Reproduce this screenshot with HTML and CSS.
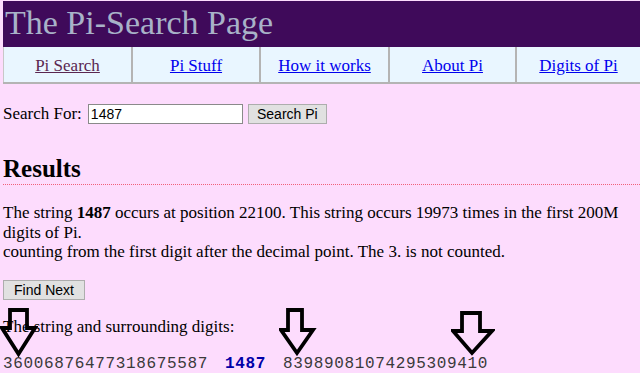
FILE: index.html
```html
<!DOCTYPE html>
<html>
<head>
<meta charset="utf-8">
<title>The Pi-Search Page</title>
<link rel="stylesheet" href="styles.css">
</head>
<body>
<div class="page">
  <header class="banner">
    <h1 class="banner-title">The Pi-Search Page</h1>
  </header>
  <nav class="menu">
    <div class="menu-cell"><a class="visited" href="#">Pi Search</a></div>
    <div class="menu-cell"><a href="#">Pi Stuff</a></div>
    <div class="menu-cell"><a href="#">How it works</a></div>
    <div class="menu-cell"><a href="#">About Pi</a></div>
    <div class="menu-cell last"><a href="#">Digits of Pi</a></div>
  </nav>
  <form class="search">
    <label class="search-label" for="q">Search For:</label>
    <input class="search-input" id="q" type="text" value="1487">
    <button class="btn search-btn" type="button">Search Pi</button>
  </form>
  <h2 class="results-title">Results</h2>
  <p class="results-text">The string <b>1487</b> occurs at position 22100. This string occurs 19973 times in the first 200M digits of Pi.<br>counting from the first digit after the decimal point. The 3. is not counted.</p>
  <button class="btn find" type="button">Find Next</button>
  <p class="digits-label">The string and surrounding digits:</p>
  <div class="digits"><span>36006876477318675587</span><b class="hit">1487</b><span>83989081074295309410</span></div>

  <svg class="arrow a1" width="38" height="50" viewBox="0 0 38 50"><polygon points="10,2 27,2 27,20 35,20 18.5,46 2,20 10,20" fill="none" stroke="#000" stroke-width="3.8" stroke-linejoin="miter"/></svg>
  <svg class="arrow a2" width="38" height="50" viewBox="0 0 38 50"><polygon points="9,2 23,2 23,22 34,22 18,45 2,22 9,22" fill="none" stroke="#000" stroke-width="3.8" stroke-linejoin="miter"/></svg>
  <svg class="arrow a3" width="44" height="48" viewBox="0 0 44 48"><polygon points="11,2 29,2 29,20 41,20 21,42 2,20 11,20" fill="none" stroke="#000" stroke-width="3.8" stroke-linejoin="miter"/></svg>
</div>
</body>
</html>
```
FILE: styles.css
```css
html, body {
  margin: 0;
  padding: 0;
  background: #fddcfd;
  overflow: hidden;
}
.page {
  position: relative;
  padding: 1px 0 0 3px;
  font-family: "Liberation Serif", "Times New Roman", serif;
  font-size: 17px;
  color: #000;
}
.banner {
  background: #3f0a5a;
  height: 46px;
}
.banner-title {
  margin: 0;
  padding: 3px 0 0 2px;
  font-weight: normal;
  font-size: 34px;
  line-height: 38px;
  color: #a8b2c8;
}
.menu {
  display: grid;
  grid-template-columns: 128px 128px 129px 127px 1fr;
  background: #e9f6ff;
  border-bottom: 2px solid #b4b4b4;
  height: 35px;
}
.menu-cell {
  display: flex;
  align-items: center;
  justify-content: center;
  border-left: 2px solid #b4b4b4;
  padding-top: 2px;
}
.menu-cell:first-child { border-left: 1px solid #c8c8c8; }
.menu-cell a { color: #0000ee; }
.menu-cell a.visited { color: #5a2650; }
.search {
  display: flex;
  align-items: center;
  margin: 19px 0 0 0;
  height: 22px;
}
.search-label { margin-right: 6px; }
.search-input {
  width: 149px;
  height: 16px;
  padding: 1px 2px;
  margin: 0 5px 0 0;
  border: 1px solid #8a8a8a;
  font-family: "Liberation Sans", Arial, sans-serif;
  font-size: 14px;
  background: #fff;
}
.btn {
  font-family: "Liberation Sans", Arial, sans-serif;
  font-size: 14px;
  background: #e1e1e1;
  border: 1px solid #adadad;
  height: 20px;
  color: #000;
}
.search-btn {
  width: 79px;
  padding: 0;
}
.results-title {
  margin: 30px 0 0 0;
  font-size: 25px;
  line-height: 28px;
  font-weight: bold;
  padding-bottom: 1px;
  border-bottom: 1px dotted #f0607a;
}
.results-text {
  margin: 18px 0 0 0;
  line-height: 19.5px;
  width: 630px;
}
.find {
  display: block;
  margin-top: 18px;
  width: 82px;
  padding: 0;
}
.digits-label {
  margin: 17px 0 0 0;
  line-height: 20px;
}
.digits {
  margin-top: 18px;
  font-family: "Liberation Mono", "Courier New", monospace;
  font-size: 16px;
  letter-spacing: 0.65px;
  color: #3a3a3a;
  display: flex;
  gap: 17px;
  line-height: 18px;
}
.digits .hit { color: #0000a8; }
.arrow { position: absolute; }
.a1 { left: 0; top: 308px; }
.a2 { left: 279px; top: 308px; }
.a3 { left: 451px; top: 311px; }
```
